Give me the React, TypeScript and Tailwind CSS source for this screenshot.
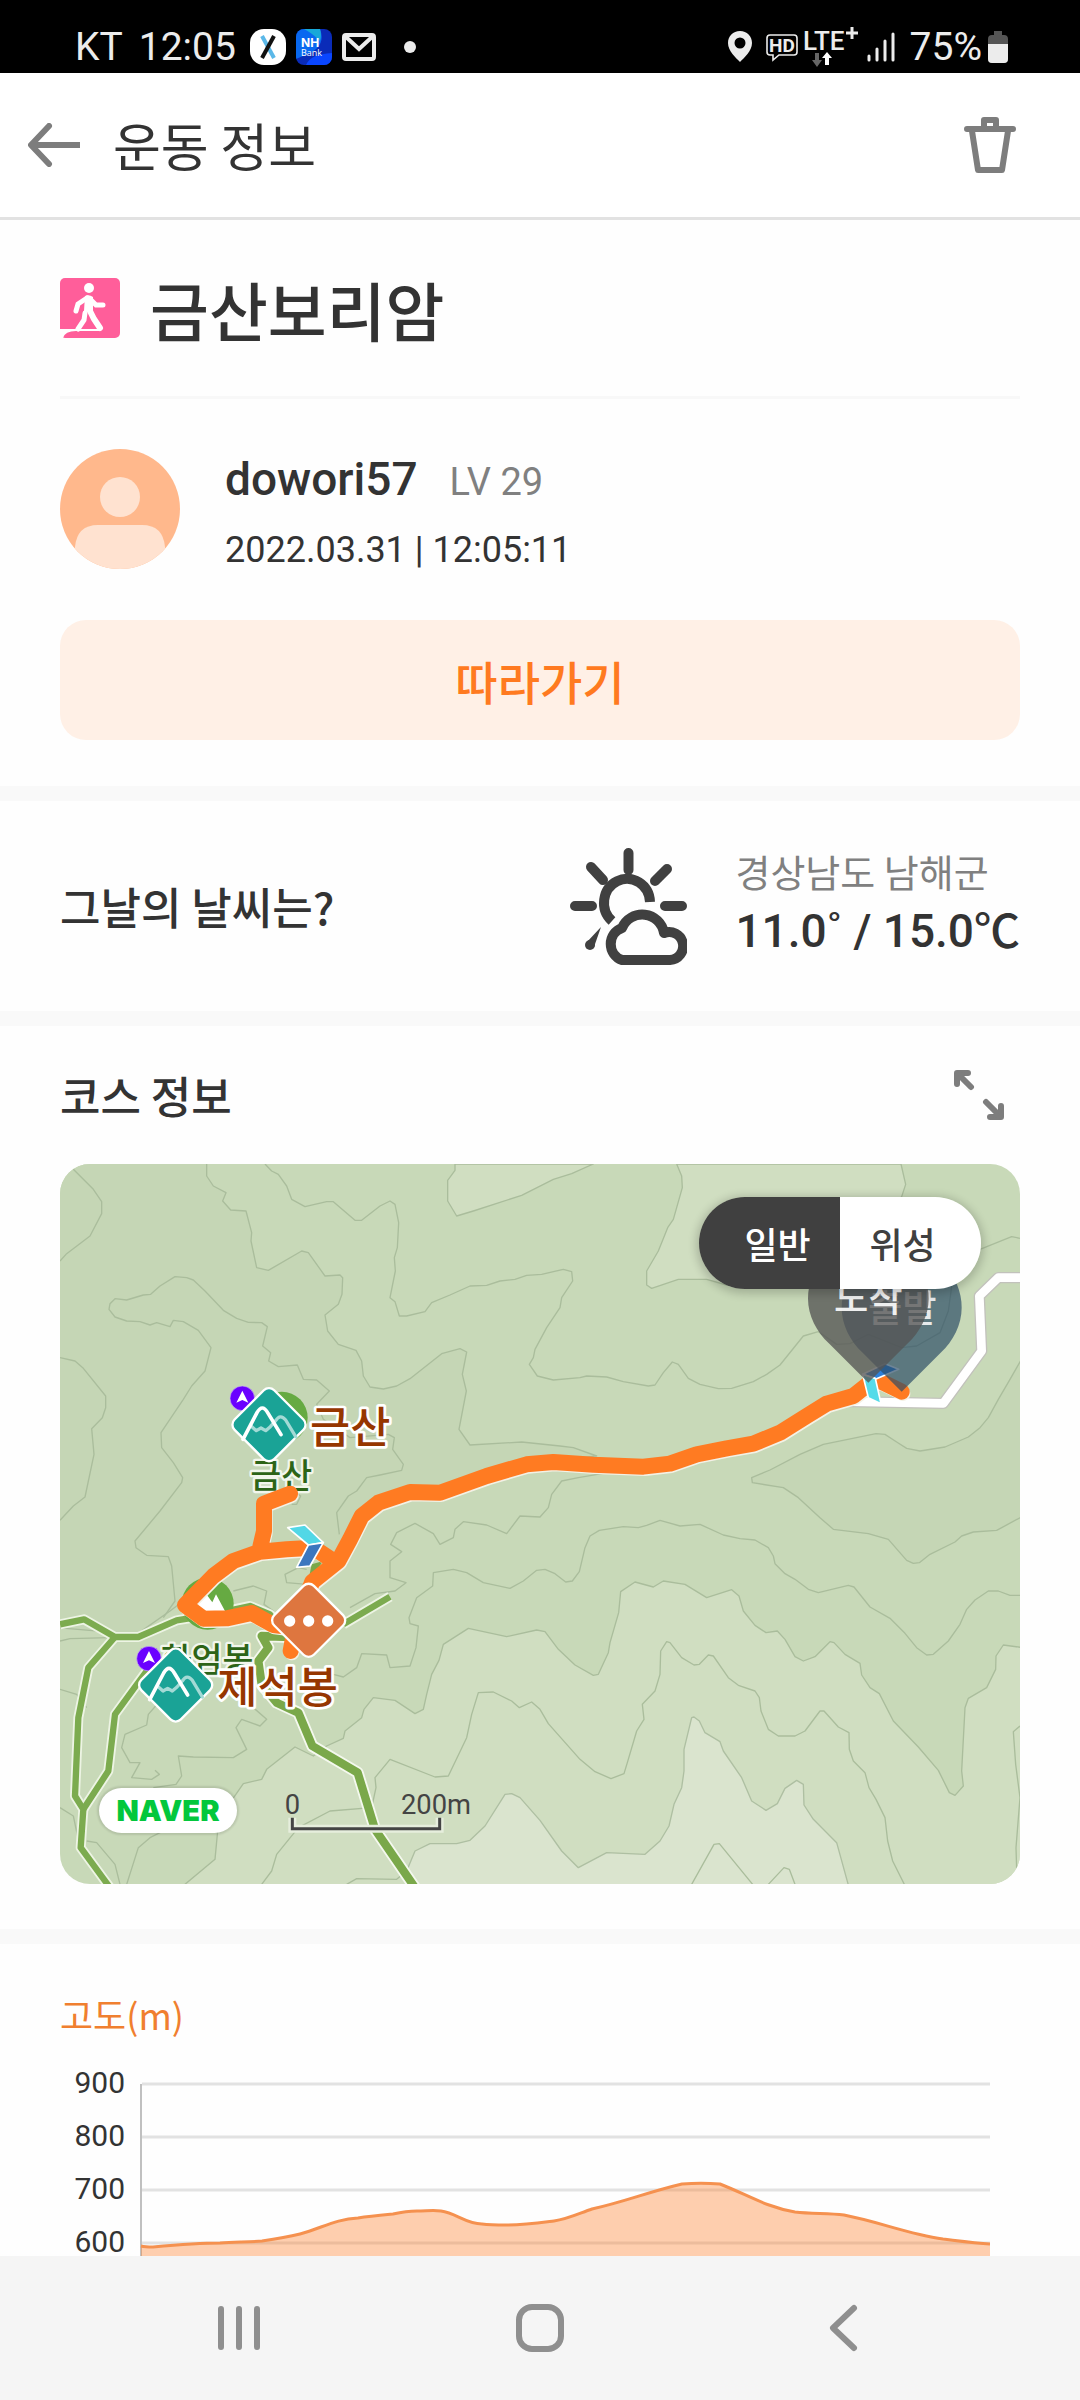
import type { ReactNode } from 'react';

const lightAreas = [
  // top ridges
  '1185,9 1185,28 1163,58 1163,120 1190,165 1240,150 1385,103 1480,55 1535,38 1600,9',
  '1850,9 1865,45 1867,80 1840,175 1823,200 1795,270 1760,330 1760,372 1775,382 1855,355 1940,355 2000,372 2300,300 2525,107 2537,70 2523,9',
  // southern valley
  '375,2170 465,2095 473,2010 500,1940 550,1868 605,1855 620,1825 705,1758 760,1785 800,1755 850,1732 855,1710 905,1670 912,1645 940,1610 1005,1618 1065,1658 1090,1645 1100,1600 1115,1540 1137,1498 1150,1450 1225,1402 1340,1427 1430,1407 1455,1412 1495,1465 1545,1512 1600,1543 1615,1540 1645,1475 1650,1445 1676,1355 1682,1292 1725,1263 1780,1278 1810,1260 1875,1270 1940,1310 2015,1286 2037,1305 2050,1350 2085,1393 2118,1415 2152,1410 2175,1435 2205,1487 2230,1500 2265,1487 2310,1442 2322,1445 2355,1480 2400,1507 2405,1542 2430,1580 2458,1598 2500,1680 2575,1758 2635,1828 2668,1895 2685,1903 2710,1875 2705,1830 2715,1640 2725,1612 2780,1580 2807,1525 2808,1485 2830,1452 2890,1460 2890,2190 370,2190',
];

const palestArea =
  '1060,2190 1040,2130 1065,2070 1110,2048 1190,2048 1230,2038 1275,1995 1335,1900 1355,1898 1380,1910 1440,1978 1505,2070 1555,2120 1640,2075 1755,2080 1800,2040 1827,1995 1842,1930 1865,1880 1872,1830 1872,1765 1895,1670 1902,1668 1918,1680 1935,1715 1980,1742 1990,1770 2045,1850 2075,1920 2118,1948 2152,1928 2175,1882 2210,1858 2230,1870 2232,1932 2260,1975 2330,2045 2370,2190';

const darkAreas = [
  '-10,-10 440,-10 440,45 460,75 498,95 488,120 512,147 558,150 575,215 573,240 590,320 625,328 725,270 745,275 795,345 840,342 848,350 846,400 835,430 795,462 803,510 835,550 888,568 905,600 910,645 930,678 970,684 1010,675 1050,653 1145,578 1200,563 1220,573 1207,640 1219,690 1197,805 1230,852 1385,843 1500,855 1540,860 1610,885 1480,900 1280,950 1140,1000 990,1010 900,1070 840,1180 600,1180 450,1260 330,1350 230,1420 -10,1400',
  '2890,585 2850,655 2815,715 2785,770 2760,800 2725,828 2655,858 2580,870 2540,862 2510,843 2475,820 2448,818 2290,850 2220,880 2130,927 2075,950 2077,965 2170,980 2215,1010 2280,1070 2320,1105 2425,1118 2485,1135 2540,1198 2560,1207 2578,1205 2610,1180 2685,1143 2705,1125 2740,1113 2810,1108 2890,1065',
];

const contours = [
  '0,300 20,278 90,225 125,158 125,122 100,85 40,25',
  '615,9 635,30 655,40 680,75 695,115 735,137 800,122 820,122 885,178 905,178 960,135 990,120 1005,130 1016,185 1012,260 1003,290 1006,330 990,410 1005,422 1018,465 1040,465 1095,452 1115,425 1170,402 1230,375 1280,373 1320,360 1365,355 1400,343 1445,340 1510,325 1535,332 1538,360 1505,410 1500,440 1460,500 1425,565 1420,590 1408,610 1432,645 1480,657 1560,650 1580,645 1640,648 1690,662 1765,675 1785,672 1810,635 1837,603 1855,610 1885,652 1920,670 1975,683 2015,682 2080,662 2120,640 2160,612 2230,525 2275,512 2330,550 2370,548 2425,520 2525,560 2570,555 2640,515 2665,450 2680,340 2760,265 2855,227 2880,232',
  '838,1120 830,1055 865,1005 890,990 920,950 960,942 1025,928 1030,910 998,865 1003,830 985,820 870,830 790,775 770,730 808,690 770,657 730,655 712,612 655,617 626,600 632,575 608,555 622,497 605,485 565,484 530,472 490,448 435,390 400,357 380,350 345,347 300,375 272,400 250,402 200,417 165,413 150,428 147,445 165,468 200,480 240,482 270,492 290,485 330,497 340,478 370,482 415,508 453,560 435,630 395,675 370,715 303,815 305,860 340,905 368,950 365,965 300,1050 225,1140 228,1160 260,1183 325,1187 335,1215 345,1320 310,1370',
  '0,590 45,600 70,622 137,705 137,740 127,770 95,803 102,880 75,1008 40,1035 0,1078',
  '1630,937 1555,950 1505,960 1475,1000 1465,1040 1440,1068 1380,1065 1340,1118 1280,1092 1210,1082 1185,1105 1180,1130 1140,1150 1120,1118 1065,1087 1010,1115 992,1150 1025,1172 990,1200 990,1250 1038,1265 1005,1290 945,1298 870,1340',
  '820,1540 850,1548 890,1520 905,1478 980,1482 990,1520 1050,1515 1068,1460 1075,1395 1050,1388 1047,1370 1070,1310 1118,1275 1120,1235 1180,1225 1220,1235 1270,1265 1350,1282 1390,1260 1430,1228 1455,1225 1485,1238 1517,1263 1537,1260 1558,1232 1575,1160 1590,1125 1618,1108 1690,1097 1735,1100 1760,1093 1800,1078 1860,1095 1920,1090 1990,1122 2040,1133 2085,1137 2125,1160 2140,1185 2145,1208 2175,1238 2205,1255 2245,1285 2275,1295 2365,1273 2382,1278 2430,1338 2490,1372 2535,1417 2570,1460 2600,1482 2620,1480 2665,1440 2700,1390 2720,1345 2745,1317 2785,1290 2815,1290 2850,1303 2880,1303',
  '605,2170 635,2130 650,2080 715,2000 810,1950 935,1940 948,1880 945,1850 990,1795 1125,1848 1165,1845 1220,1730 1235,1660 1255,1595 1300,1593 1355,1620 1378,1640 1415,1623 1440,1645 1465,1688 1560,1795 1605,1832 1653,1853 1692,1838 1702,1805 1730,1710 1752,1675 1747,1630 1785,1590 1800,1540 1802,1470 1820,1442 1830,1445 1865,1490 1902,1512 1918,1510 1945,1482 1960,1485 2005,1550 2035,1573 2085,1590 2098,1610 2103,1650 2125,1705 2155,1725 2205,1725 2235,1710 2280,1650 2292,1650 2335,1698 2367,1715 2368,1765 2380,1800 2415,1835 2427,1880 2448,1915 2475,1970 2483,2040 2498,2100 2533,2170',
  '1895,2170 1962,2050 1978,2048 2078,2170',
  '2125,2170 2172,2120 2188,2125 2205,2170',
  '2880,1695 2860,1712 2867,1810 2880,1910 2868,2060 2870,2125',
  '860,2170 890,2153 1010,2155 1040,2130',
  '300,1620 265,1660 260,1692 195,1720 185,1760 210,1805 240,1805 215,1850 275,1855 298,1840 285,1828',
  '280,1880 348,1870 365,1845 355,1785 400,1788 520,1790 560,1765 528,1700 545,1675 600,1695 620,1675 580,1640',
  '200,2170 235,2060 270,2030 340,1995 465,1990',
  '80,2040 110,2045 165,2110 180,2170',
  '0,1940 40,1965 60,2060',
  '0,1585 50,1600 80,1640',
  '0,1440 30,1433 150,1430',
  '740,1270 680,1265 675,1240 715,1220 740,1225',
  '520,1290 580,1275 620,1290 612,1330 640,1350',
  '695,1030 710,1030 722,1005 700,990',
];

const trails = [
  '0,1390 72,1375 165,1428 235,1428 350,1378 430,1365 570,1335 630,1360 680,1425',
  '165,1428 85,1520 55,1670 45,1905 70,1945 62,2060 150,2180',
  '70,1945 145,1830 165,1660 260,1530 350,1500',
  '850,1390 990,1307',
];

const mainTrail =
  '690,1428 605,1425 625,1460 595,1500 605,1570 650,1625 715,1655 757,1755 893,1835 945,2005 1065,2180';

const road = '2370,722 2650,727 2765,570 2758,405 2815,350 2890,350';

const route =
  'M692 1470 L705 1400 L757 1262 L835 1200 L870 1135 L905 1065 L955 1025 L1050 993 L1140 995 L1280 945 L1400 910 L1480 903 L1600 911 L1750 917 L1830 908 L1910 880 L2000 862 L2080 848 L2160 815 L2240 765 L2300 728 L2380 705 L2430 665 L2460 660 L2525 692 ' +
  'M690 998 L612 1028 L612 1110 L598 1170 ' +
  'M820 1200 L760 1160 L680 1165 L600 1172 L520 1200 L460 1245 L375 1332 L430 1373 L500 1372 L575 1356 L640 1392 L705 1400';

const levels = [
  { label: '900', y: 33 },
  { label: '800', y: 86 },
  { label: '700', y: 139 },
  { label: '600', y: 192 },
];

const elevation =
  'M81 195 C85 196 89 196 93 196 C115 194 138 192 160 192 C175 191 190 191 202 190 C216 188 228 186 240 183 C262 177 276 168 298 167 C310 165 322 164 333 163 C342 161 348 160 357 160 C366 160 374 159 381 160 C396 162 406 173 422 173 C430 174 438 174 446 174 C464 174 478 172 494 170 C508 168 520 162 532 158 C564 151 588 141 622 133 C634 132 648 132 660 133 C688 144 706 156 735 161 C752 163 768 162 784 164 C820 171 848 183 883 188 C900 190 915 192 930 193';

function StatusBar() {
  return (
    <div className="flex h-[73px] shrink-0 items-center justify-between bg-black pr-[72px] pl-[75px] pt-5 text-[#ececec]">
      <div className="flex items-center font-[Roboto,sans-serif] text-[39px] leading-10">
        <span>KT</span>
        <span className="ml-4">12:05</span>
        <svg viewBox="0 0 36 36" className="ml-[14px] size-9">
          <rect width="36" height="36" rx="14" fill="#fff" />
          <path d="M12 7 L24 29" stroke="#5bb8e8" strokeWidth="4" />
          <path d="M24 7 L12 29" stroke="#111" strokeWidth="4" />
        </svg>
        <svg viewBox="0 0 36 36" className="ml-[10px] size-9 rounded-lg">
          <rect width="36" height="36" fill="#0a2bb8" />
          <path d="M0 0 H24 Q30 16 14 24 L0 30 Z" fill="#0868f0" />
          <path d="M8 0 H24 Q26 6 24 12 Q16 4 8 0 Z" fill="#17a8d8" />
          <path d="M10 36 Q14 25 36 24 V36 Z" fill="#0a46ff" />
          <text x="5" y="18" fontSize="12" fontWeight="700" fill="#fff" fontFamily="Inter, sans-serif">NH</text>
          <text x="5" y="27" fontSize="9" fill="#fff" fontFamily="Open Sans, sans-serif">Bank</text>
        </svg>
        <svg viewBox="0 0 34 28" className="ml-[10px] h-7 w-[34px]" fill="none" stroke="#ececec" strokeWidth="4">
          <rect x="2" y="2" width="30" height="24" rx="2" />
          <path d="M4 4 L17 16 L30 4" />
        </svg>
        <span className="ml-7 size-3 rounded-full bg-[#ececec]" />
      </div>
      <div className="flex items-center">
        <svg viewBox="0 0 24 31" className="h-[31px] w-6" fill="#ececec">
          <path fillRule="evenodd" d="M12 0 C5 0 0 5 0 12 C0 20 8 27 12 31 C16 27 24 20 24 12 C24 5 19 0 12 0 Z M12 6.500 A5.500 5.500 0 1 1 12 17.500 A5.500 5.500 0 1 1 12 6.500 Z" />
        </svg>
        <svg viewBox="0 0 34 30" className="ml-[13px] h-[30px] w-[34px]">
          <path d="M5 3 H29 Q32 3 32 6 V20 Q32 23 29 23 H14 L8 28 V23 H5 Q2 23 2 20 V6 Q2 3 5 3 Z" fill="none" stroke="#ececec" strokeWidth="1.600" />
          <text x="17" y="20" textAnchor="middle" fontSize="19" fontWeight="700" fill="#ececec" fontFamily="Roboto, sans-serif">HD</text>
        </svg>
        <svg viewBox="0 0 56 42" className="ml-1 h-[42px] w-14" fill="#ececec">
          <text x="0" y="24" fontSize="26" fontWeight="500" fontFamily="Roboto, sans-serif">LTE</text>
          <path d="M43 7 H55 M49 1 V13" stroke="#ececec" strokeWidth="3" />
          <path d="M12 27 H16 V34 H19 L14 41 L9 34 H12 Z" fill="#666" />
          <path d="M22 39 V32 H19 L24 26 L29 32 H26 V39 Z" fill="#fff" />
        </svg>
        <svg viewBox="0 0 28 30" className="ml-2 h-[30px] w-7" stroke="#ececec" strokeWidth="3" strokeLinecap="round">
          <path d="M2 24 V28 M10 17 V28 M18 9 V28 M26 2 V28" />
        </svg>
        <span className="ml-[15px] font-[Roboto,sans-serif] text-[39px] leading-10">75%</span>
        <svg viewBox="0 0 20 32" className="ml-[6px] h-8 w-5">
          <path d="M6 0 H14 V4 H16 Q20 4 20 8 V28 Q20 32 16 32 H4 Q0 32 0 28 V8 Q0 4 4 4 H6 Z" fill="#555" />
          <path d="M0 13 H20 V28 Q20 32 16 32 H4 Q0 32 0 28 Z" fill="#ececec" />
        </svg>
      </div>
    </div>
  );
}

function Header() {
  return (
    <header className="flex h-[147px] shrink-0 items-center border-b-[3px] border-[#e2e2e2] bg-white pr-16 pl-7">
      <button type="button" aria-label="뒤로">
        <svg viewBox="0 0 53 44" className="h-11 w-[53px]" fill="none" stroke="#7d7d7d" strokeWidth="6" strokeLinecap="round" strokeLinejoin="round">
          <path d="M21 3 L3 22 L21 41" />
          <path d="M3 22 H52" strokeLinecap="butt" />
        </svg>
      </button>
      <h1 className="ml-8 flex-1 text-[52px] leading-[60px]">운동 정보</h1>
      <button type="button" aria-label="삭제">
        <svg viewBox="0 0 52 57" className="h-[57px] w-[52px]" fill="none" stroke="#7d7d7d" strokeWidth="6" strokeLinecap="round" strokeLinejoin="round">
          <path d="M3 12 H49 M20 12 V3 H32 V12 M8 14 L14 53 H38 L44 14" />
        </svg>
      </button>
    </header>
  );
}

function Section({ children }: { children: ReactNode }) {
  return <section className="border-b-[15px] border-[#f9f9f9] px-[60px]">{children}</section>;
}

function Profile() {
  return (
    <Section>
      <div className="flex h-44 items-center gap-[30px]">
        <svg viewBox="0 0 60 60" className="size-[60px]">
          <rect width="60" height="60" rx="5" fill="#ff5e9a" />
          <circle cx="29" cy="10" r="5" fill="#fff" />
          <path d="M27 20 L18 26 L16 33 M30 21 L36 27 L43 27" stroke="#fff" strokeWidth="5" strokeLinecap="round" fill="none" />
          <path d="M25 18 Q29 16 33 19 L33 34 L24 33 Z" fill="#fff" />
          <path d="M29 31 L34 41 L40 50" stroke="#fff" strokeWidth="6" strokeLinecap="round" fill="none" />
          <path d="M25 35 L24 42 L18 51" stroke="#fff" strokeWidth="5" strokeLinecap="round" fill="none" />
          <path d="M0 51 H40 V53 H16 Q5 53 3 60 H0 Z" fill="#fff" />
        </svg>
        <h2 className="text-[64px] leading-[80px] font-medium">금산보리암</h2>
      </div>
      <div className="flex h-[173px] gap-[45px] border-t-[3px] border-[#f8f8f8] pt-[50px]">
        <svg viewBox="0 0 120 120" className="size-[120px] rounded-full">
          <rect width="120" height="120" fill="#ffb88c" />
          <circle cx="60" cy="48" r="20" fill="#ffe2d0" />
          <path d="M15 120 V98 Q17 76 38 76 H82 Q103 76 105 98 V120 Z" fill="#ffe2d0" />
        </svg>
        <div className="flex flex-col gap-4 font-[Roboto,sans-serif]">
          <div className="flex items-baseline gap-8 leading-[60px]">
            <span className="text-[46px] font-medium">dowori57</span>
            <span className="text-[38px] text-[#808080]">LV 29</span>
          </div>
          <p className="text-[36px] leading-[44px]">2022.03.31 | 12:05:11</p>
        </div>
      </div>
      <button
        type="button"
        className="mt-[51px] mb-[46px] block h-[120px] w-full rounded-[26px] bg-[#fff0e6] text-[46px] font-medium text-[#ff7a20]"
      >
        따라가기
      </button>
    </Section>
  );
}

function Weather() {
  return (
    <Section>
      <div className="flex h-[210px] items-center">
        <h3 className="flex-1 text-[44px] font-medium">그날의 날씨는?</h3>
        <svg viewBox="0 0 117 117" className="size-[117px]" fill="none" stroke="#404040" strokeWidth="10" strokeLinecap="round">
          <path d="M58.500 5 V22 M21 19 L33 32 M97 21 L85 33 M5 58 H22 M95 58 H112" />
          <path d="M42 73 A23 24 0 1 1 80 54" strokeLinecap="butt" />
          <path d="M16 95 L31 79 L24 99 Z" fill="#404040" stroke="none" />
          <circle cx="20" cy="97" r="5" fill="#404040" stroke="none" />
          <path d="M52 112 A17 17 0 0 1 52 80 A22 22 0 0 1 94 85 A14 14 0 1 1 100 112 Z" strokeLinejoin="round" />
        </svg>
        <div className="ml-12">
          <p className="text-[38px] leading-[50px] text-[#808080]">경상남도 남해군</p>
          <p className="font-[Roboto,'Noto_Sans_CJK_KR',sans-serif] text-[46px] leading-[70px] font-medium">11.0˚ / 15.0℃</p>
        </div>
      </div>
    </Section>
  );
}

function PeakMarker({ x, y }: { x: number; y: number }) {
  return (
    <g transform={`translate(${x} ${y})`} fill="none" strokeLinecap="round" strokeLinejoin="round">
      <circle cx="-80" cy="-79" r="37" fill="#6a00ff" stroke="#c9b5ee" strokeWidth="2" />
      <path d="M-80 -102 L-62 -66 L-80 -74 L-98 -66 Z" fill="#fff" />
      <rect x="-84" y="-84" width="168" height="168" rx="22" transform="rotate(45)" fill="#1aa396" stroke="#fff" strokeWidth="7" />
      <path d="M-54 4 L-38 18 L-24 10 L-10 18 L4 6 L20 -12 Q34 -34 50 -14 L80 36" stroke="#a3dad5" strokeWidth="10" />
      <path d="M-78 44 L-36 -36 Q-20 -64 -4 -36 L36 30" stroke="#fff" strokeWidth="11" />
    </g>
  );
}

function TrailMap() {
  return (
    <svg viewBox="0 9 2880 2160" className="h-full w-full" fill="none" strokeLinejoin="round">
      <rect y="9" width="2880" height="2160" fill="#c8d9b8" />
      {darkAreas.map((points) => (
        <polygon key={points} points={points} fill="#c5d6b5" stroke="#aabd9c" strokeWidth="4" />
      ))}
      {lightAreas.map((points) => (
        <polygon key={points} points={points} fill="#d0dec1" stroke="#aabd9c" strokeWidth="4" />
      ))}
      <polygon points={palestArea} fill="#dae4ce" stroke="#aebfa2" strokeWidth="4" />
      {contours.map((points) => (
        <polyline key={points} points={points} stroke="#aabd9c" strokeWidth="4" />
      ))}

      {/* Trails */}
      {trails.map((points) => (
        <polyline key={points} points={points} stroke="#edf4e4" strokeWidth="30" />
      ))}
      <polyline points={mainTrail} stroke="#f4f8ee" strokeWidth="36" />
      {trails.map((points) => (
        <polyline key={points} points={points} stroke="#7cab4f" strokeWidth="19" />
      ))}
      <polyline points={mainTrail} stroke="#7aa84a" strokeWidth="25" />

      {/* Road */}
      <polyline points={road} stroke="#c2c2bc" strokeWidth="34" />
      <polyline points={road} stroke="#fff" strokeWidth="26" />

      <circle cx="665" cy="770" r="78" fill="#66aa42" />
      <circle cx="443" cy="1328" r="78" fill="#66aa42" />
      <path d="M395 1355 L438 1298 L457 1324 L468 1300 L495 1350 Z" fill="#fff" />
      <path d="M745 1260 L755 1210 L790 1200 Z" fill="#7aa84a" />

      <g fontFamily="Noto Sans CJK KR, sans-serif" paintOrder="stroke" stroke="#f2f6ec" strokeWidth="14">
        <text x="571" y="980" fontSize="101" fontWeight="500" fill="#2d6417">금산</text>
        <text x="302" y="1533" fontSize="101" fontWeight="500" fill="#2d6417">화엄봉</text>
      </g>

      <path d={route} transform="translate(4 6)" stroke="#f4f1e6" strokeWidth="44" strokeLinecap="round" />
      <path d={route} stroke="#ff7b22" strokeWidth="48" strokeLinecap="round" />

      <g stroke="#fff" strokeWidth="5">
        <path d="M683 1100 L735 1092 L790 1145 L745 1152 Z" fill="#52d7e6" />
        <path d="M745 1152 L790 1145 L750 1215 L710 1219 Z" fill="#3b77be" />
        <path d="M2408 640 L2475 608 L2516 625 L2448 654 Z" fill="#2c7fd8" />
        <path d="M2408 640 L2446 652 L2463 728 L2425 710 Z" fill="#55dbe9" />
      </g>

      {/* Start and finish pins */}
      <g fontFamily="Noto Sans CJK KR, sans-serif" fontSize="112" fontWeight="500" fill="#fff" textAnchor="middle">
        <path d="M2525 692 L2408 575 C2370 540 2345 490 2345 440 A180 180 0 0 1 2705 440 C2705 490 2680 540 2642 575 Z" fill="#2a4a64" opacity="0.68" />
        <text x="2527" y="484" opacity="0.85">출발</text>
        <path d="M2425 665 L2308 548 C2270 513 2244 463 2244 413 A181 181 0 0 1 2606 413 C2606 463 2580 513 2542 548 Z" fill="#545454" opacity="0.78" />
        <text x="2425" y="452" opacity="0.9">도착</text>
      </g>

      <PeakMarker x={627} y={791} />
      <PeakMarker x={347} y={1572} />
      <rect x="-84" y="-84" width="168" height="168" rx="22" transform="translate(746 1378) rotate(45)" fill="#de763f" stroke="#fff" strokeWidth="7" />
      <g fill="#fff">
        <circle cx="689" cy="1380" r="17" />
        <circle cx="746" cy="1380" r="17" />
        <circle cx="803" cy="1380" r="17" />
      </g>

      <g fontFamily="Noto Sans CJK KR, sans-serif" fontSize="131" fontWeight="500" fill="#963600" paintOrder="stroke" stroke="#fff" strokeWidth="16">
        <text x="750" y="847">금산</text>
        <text x="472" y="1626">제석봉</text>
      </g>

      {/* Scale bar */}
      <g fontFamily="Roboto, sans-serif" fontSize="82" fill="#444" textAnchor="middle">
        <text x="697" y="1958">0</text>
        <text x="1128" y="1958">200m</text>
      </g>
      <path d="M697 1970 V2003 H1139 V1970" stroke="#e6eedd" strokeWidth="24" strokeLinejoin="miter" />
      <path d="M697 1970 V2003 H1139 V1970" stroke="#444" strokeWidth="9" strokeLinejoin="miter" />
    </svg>
  );
}

function Course() {
  return (
    <Section>
      <div className="flex h-[138px] items-center justify-between pr-4">
        <h3 className="text-[44px] font-medium">코스 정보</h3>
        <button type="button" aria-label="지도 확대">
          <svg viewBox="0 0 50 50" className="size-[50px]" fill="none" stroke="#7d7d7d" strokeWidth="6" strokeLinecap="round" strokeLinejoin="round">
            <path d="M3 14 V3 H14 M4 4 L17 17 M47 36 V47 H36 M46 46 L32 32" />
            <path d="M3 3 L10 4 L4 10 Z M47 47 L40 46 L46 40 Z" fill="#7d7d7d" strokeWidth="3" />
          </svg>
        </button>
      </div>
      <div className="relative mb-[45px] aspect-[4/3] overflow-hidden rounded-[30px]">
        <TrailMap />
        <div className="absolute top-[33px] right-[39px] flex h-[92px] w-[282px] overflow-hidden rounded-full text-[36px] font-medium text-[#404040] shadow-[0_2px_8px_3px_rgba(0,0,0,0.18)]">
          <button type="button" aria-pressed="true" className="flex-1 bg-[#404040] pl-4 text-white">일반</button>
          <button type="button" aria-pressed="false" className="flex-1 bg-white pr-4">위성</button>
        </div>
        <span className="absolute bottom-[51px] left-[39px] flex h-[45px] w-[138px] items-center justify-center rounded-full bg-white font-[Inter,sans-serif] text-[29px] font-black text-[#03c73c] shadow-[0_0_2px_2px_rgba(0,0,0,0.1)]">
          NAVER
        </span>
      </div>
    </Section>
  );
}

function Elevation() {
  return (
    <section className="px-[60px] pt-12">
      <h3 className="text-[36px] leading-[44px] text-[#f07f2f]">고도(m)</h3>
      <div className="mt-[15px] pr-[30px]">
        <svg viewBox="0 0 930 300" className="w-full">
          {levels.map((level) => (
            <g key={level.label}>
              <path d={`M82 ${level.y} H930`} stroke="#e2e2e2" strokeWidth="3" />
              <text x="65" y={level.y + 9} textAnchor="end" fontSize="30" fill="#333" fontFamily="Roboto, sans-serif">
                {level.label}
              </text>
            </g>
          ))}
          <path d="M81 33 V300" stroke="#c0c0c0" strokeWidth="2" />
          <path d={`${elevation} V300 H81 Z`} fill="#ff7b22" opacity="0.36" />
          <path d={elevation} fill="none" stroke="#f5914f" strokeWidth="3" />
        </svg>
      </div>
    </section>
  );
}

function NavBar() {
  return (
    <nav className="grid h-36 shrink-0 grid-cols-3 bg-[#f5f5f5] px-[88px]">
      <button type="button" aria-label="최근 앱" className="flex items-center justify-center">
        <svg viewBox="0 0 50 50" className="size-[50px]" stroke="#8f8f8f" strokeWidth="6" strokeLinecap="round">
          <path d="M7 6 V44 M25 6 V44 M43 6 V44" />
        </svg>
      </button>
      <button type="button" aria-label="홈" className="flex items-center justify-center">
        <svg viewBox="0 0 50 50" className="size-[50px]" fill="none" stroke="#8f8f8f" strokeWidth="6">
          <rect x="4" y="4" width="42" height="42" rx="13" />
        </svg>
      </button>
      <button type="button" aria-label="이전" className="flex items-center justify-center">
        <svg viewBox="0 0 50 50" className="size-[50px]" fill="none" stroke="#8f8f8f" strokeWidth="6" strokeLinecap="round" strokeLinejoin="round">
          <path d="M38 5 L17 25 L38 45" />
        </svg>
      </button>
    </nav>
  );
}

export default function App() {
  return (
    <div className="flex h-screen flex-col bg-[#fefefe] font-['Noto_Sans_CJK_KR',sans-serif] text-[#333]">
      <StatusBar />
      <Header />
      <main className="min-h-0 flex-1 overflow-hidden">
        <Profile />
        <Weather />
        <Course />
        <Elevation />
      </main>
      <NavBar />
    </div>
  );
}
